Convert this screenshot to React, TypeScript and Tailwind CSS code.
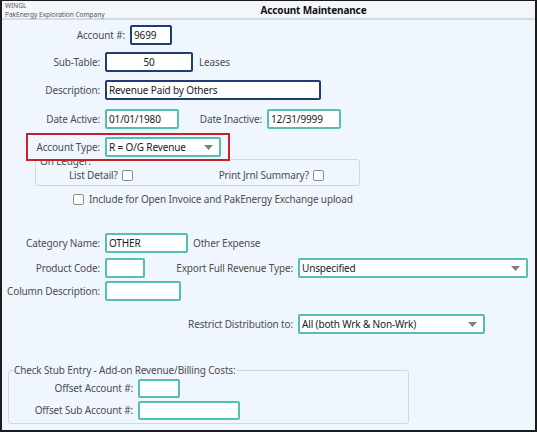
import React from "react";

const font = { fontFamily: '"Noto Sans", "Open Sans", sans-serif', letterSpacing: "-0.15px" };

function Caret() {
  return (
    <svg width="9" height="5" viewBox="0 0 9 5" className="shrink-0">
      <path d="M0 0 L9 0 L4.5 5 Z" fill="#808080" />
    </svg>
  );
}

function Teal({ w, h = "h-[20px]", value = "", center = false }: { w: string; h?: string; value?: string; center?: boolean }) {
  return (
    <div
      className={`${w} ${h} border-2 border-[#55bfb2] rounded-[2px] bg-white flex items-center px-[2px] text-[10px] text-[#1a1a1a] shrink-0 ${center ? "justify-center" : ""}`}
    >
      {value}
    </div>
  );
}

function Navy({ w, value = "", center = false }: { w: string; value?: string; center?: boolean }) {
  return (
    <div
      className={`${w} h-[20px] border-2 border-[#1e3d74] rounded-[2px] bg-white flex items-center px-[2px] text-[10px] text-[#1a1a1a] shrink-0 ${center ? "justify-center" : ""}`}
    >
      {value}
    </div>
  );
}

function Select({ w, value }: { w: string; value: string }) {
  return (
    <div className={`${w} h-[20px] border-2 border-[#55bfb2] rounded-[2px] bg-white flex items-center justify-between pl-[2px] pr-[6px] text-[10px] text-[#1a1a1a] shrink-0`}>
      <span>{value}</span>
      <Caret />
    </div>
  );
}

function Check() {
  return <div className="w-[11px] h-[11px] border border-[#8c8c8c] rounded-[2px] bg-white shrink-0" />;
}

function Label({ w, children }: { w: string; children: React.ReactNode }) {
  return <div className={`${w} text-right pr-[5px] text-[10px] text-[#4d4d4d] whitespace-nowrap shrink-0`}>{children}</div>;
}

export default function App() {
  return (
    <div style={font} className="w-[537px] h-[432px] bg-[#1c1c1c] p-[2px] pt-[1px] overflow-hidden">
      <div className="w-full h-full bg-[#f0f6fd] flex flex-col">
        {/* header */}
        <div className="h-[19px] relative flex items-start border-b-2 border-[#d6dbe0] bg-[#f3f7fc]">
          <div className="pl-[3px] leading-[8px] text-[6.5px] text-[#555] tracking-normal">
            <div className="pt-[1px]">WINGL</div>
            <div className="pt-[1px]">PakEnergy Exploration Company</div>
          </div>
          <div className="absolute left-0 right-0 top-[2px] text-center text-[10px] font-bold text-[#111] leading-[14px] pl-[90px]">
            Account Maintenance
          </div>
        </div>

        <div className="flex flex-col">
          {/* Account # */}
          <div className="flex items-center mt-[5px]">
            <Label w="w-[128px]">Account #:</Label>
            <Navy w="w-[42px]" value="9699" />
          </div>
          {/* Sub-table */}
          <div className="flex items-center mt-[7px]">
            <Label w="w-[103px]">Sub-Table:</Label>
            <Navy w="w-[88px]" value="50" center />
            <span className="ml-[6px] text-[10px] text-[#4d4d4d]">Leases</span>
          </div>
          {/* Description */}
          <div className="flex items-center mt-[8px]">
            <Label w="w-[103px]">Description:</Label>
            <Navy w="w-[216px]" value="Revenue Paid by Others" />
          </div>
          {/* Dates */}
          <div className="flex items-center mt-[9px]">
            <Label w="w-[103px]">Date Active:</Label>
            <Teal w="w-[74px]" value="01/01/1980" />
            <Label w="w-[88px]">Date Inactive:</Label>
            <Teal w="w-[74px]" value="12/31/9999" />
          </div>
          {/* Account type + on ledger */}
          <div className="relative mt-[4px] h-[56px]">
            <div className="absolute left-[33px] top-[26px] w-[325px] h-[27px] border border-[#d2d8de] rounded-[3px]">
              <span className="absolute left-[4px] -top-[4px] text-[10px] text-[#4d4d4d] leading-[10px]">On Ledger:</span>
              <div className="flex items-center mt-[9px]">
                <span className="ml-[33px] text-[10px] text-[#4d4d4d] leading-[12px]">List Detail?</span>
                <div className="ml-[4px]"><Check /></div>
                <span className="ml-[86px] text-[10px] text-[#4d4d4d] leading-[12px]">Print Jrnl Summary?</span>
                <div className="ml-[4px]"><Check /></div>
              </div>
            </div>
            <div className="absolute left-[24px] top-0 w-[204px] h-[28px] border-2 border-[#c8212b] bg-[#f0f6fd] flex items-center">
              <Label w="w-[77px]">Account Type:</Label>
              <Select w="w-[116px]" value="R = O/G Revenue" />
            </div>
          </div>
          {/* include */}
          <div className="flex items-center mt-[3px] ml-[71px]">
            <Check />
            <span className="ml-[5px] text-[10px] text-[#4d4d4d] leading-[14px]">Include for Open Invoice and PakEnergy Exchange upload</span>
          </div>
          {/* Category */}
          <div className="flex items-center mt-[27px]">
            <Label w="w-[103px]">Category Name:</Label>
            <Teal w="w-[83px]" value="OTHER" />
            <span className="ml-[5px] text-[10px] text-[#4d4d4d]">Other Expense</span>
          </div>
          {/* Product */}
          <div className="flex items-center mt-[5px]">
            <Label w="w-[103px]">Product Code:</Label>
            <Teal w="w-[40px]" />
            <Label w="w-[153px]">Export Full Revenue Type:</Label>
            <Select w="w-[230px]" value="Unspecified" />
          </div>
          {/* Column Desc */}
          <div className="flex items-center mt-[3px]">
            <Label w="w-[103px]">Column Description:</Label>
            <Teal w="w-[76px]" />
          </div>
          {/* Restrict */}
          <div className="flex items-center mt-[13px]">
            <Label w="w-[296px]">Restrict Distribution to:</Label>
            <Select w="w-[187px]" value="All (both Wrk & Non-Wrk)" />
          </div>
          {/* Check stub */}
          <div className="relative mt-[36px] ml-[6px] w-[401px] h-[54px] border border-[#d2d8de] rounded-[3px] flex flex-col">
            <span className="absolute left-[5px] -top-[8px] text-[10px] text-[#4d4d4d] leading-[14px] bg-[#f0f6fd] pr-[1px]">
              Check Stub Entry - Add-on Revenue/Billing Costs:
            </span>
            <div className="flex items-center mt-[8px]">
              <Label w="w-[129px]">Offset Account #:</Label>
              <Teal w="w-[42px]" h="h-[19px]" />
            </div>
            <div className="flex items-center mt-[3px]">
              <Label w="w-[129px]">Offset Sub Account #:</Label>
              <Teal w="w-[102px]" h="h-[19px]" />
            </div>
          </div>
        </div>
      </div>
    </div>
  );
}
